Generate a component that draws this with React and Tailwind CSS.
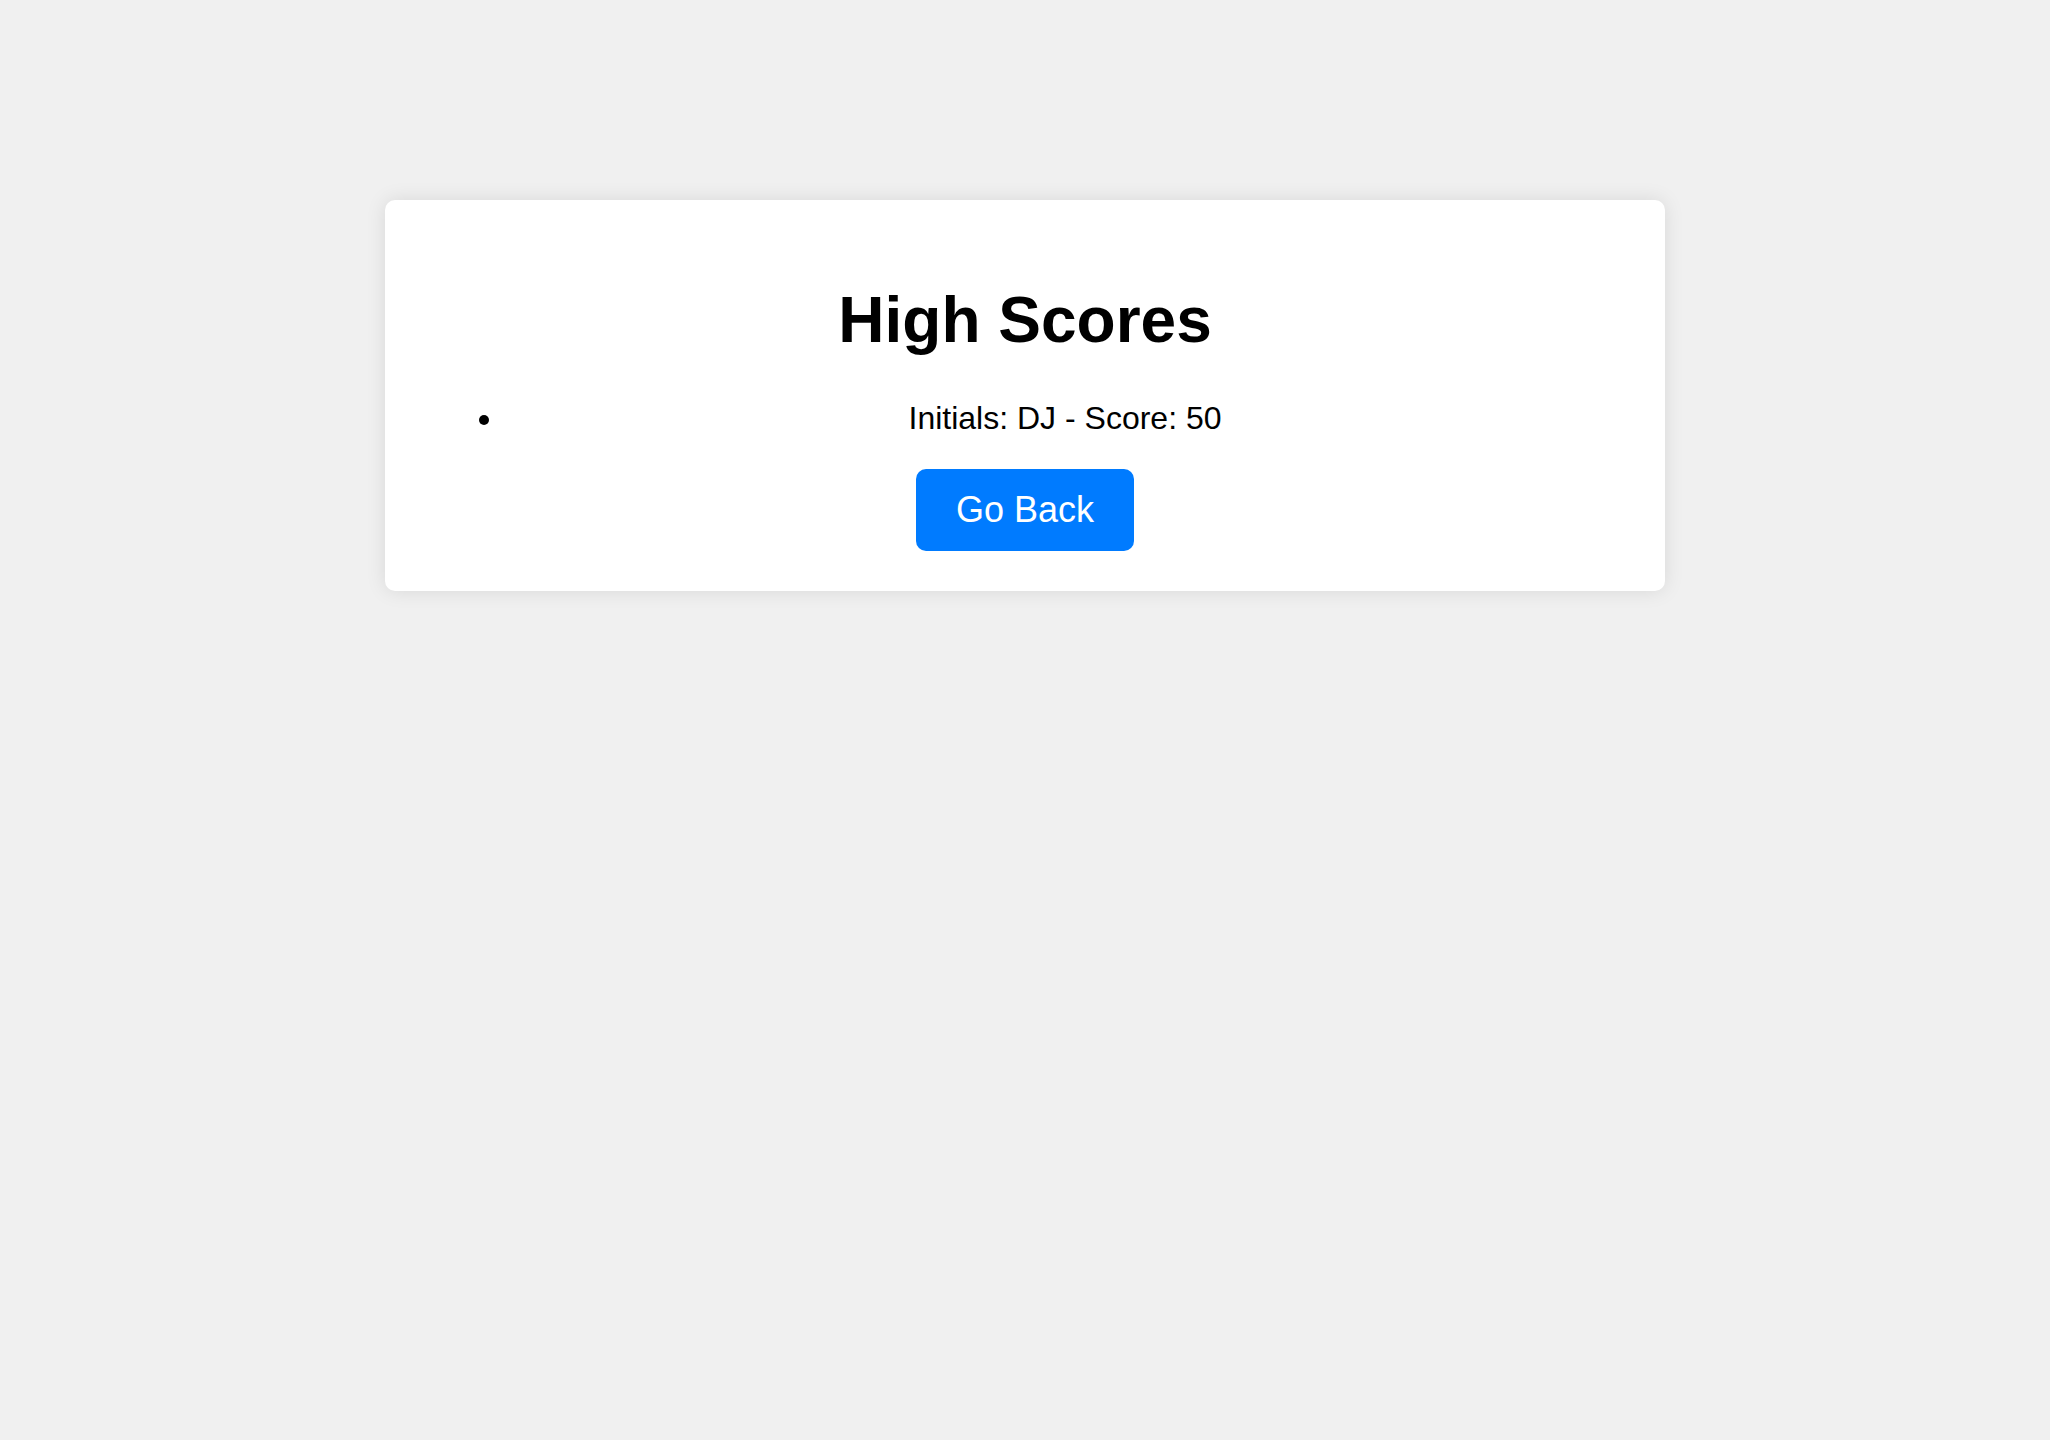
import React from 'react';

const scores = [{ initials: 'DJ', score: 50 }];

const App = () => {
    return (
        <div className="min-h-screen bg-[#f0f0f0] pt-[200px] font-['Liberation_Sans',Arial,sans-serif] text-[32px] leading-[normal] text-black">
            {/* High scores card */}
            <div className="mx-auto w-[1280px] rounded-[10px] bg-white p-[40px] text-center shadow-[0_0_20px_rgba(0,0,0,0.1)]">
                <h1 className="my-[43px] text-[64px] font-bold leading-[normal]">High Scores</h1>
                <ul className="my-[32px] list-disc pl-[80px]">
                    {scores.map((s, i) => (
                        <li key={i}>Initials: {s.initials} - Score: {s.score}</li>
                    ))}
                </ul>
                <button
                    type="button"
                    className="cursor-pointer rounded-[10px] bg-[#007bff] px-[40px] py-[20px] text-[36px] leading-[normal] text-white"
                >
                    Go Back
                </button>
            </div>
        </div>
    );
};

export default App;
